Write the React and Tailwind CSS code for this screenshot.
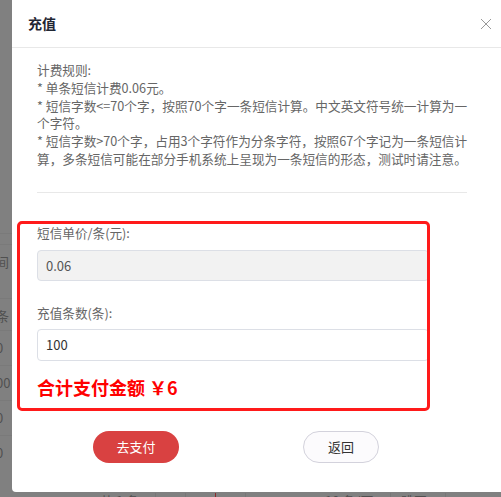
import React from "react";

const rules = [
  "计费规则:",
  "* 单条短信计费0.06元。",
  "* 短信字数<=70个字，按照70个字一条短信计算。中文英文符号统一计算为一",
  "个字符。",
  "* 短信字数>70个字，占用3个字符作为分条字符，按照67个字记为一条短信计",
  "算，多条短信可能在部分手机系统上呈现为一条短信的形态，测试时请注意。",
];

// table behind the mask, only a sliver is visible on the left
const bgRows = [
  { top: 233, text: "" },
  { top: 244, text: "间" },
  { top: 298, text: "条" },
  { top: 330, text: "0" },
  { top: 365, text: "00" },
  { top: 400, text: "0" },
  { top: 435, text: "0" },
];

const App = () => {
  return (
    <div
      className="relative w-[501px] h-[497px] overflow-hidden bg-[#808080]"
      style={{ fontFamily: '"Noto Sans CJK SC", "Noto Sans", sans-serif' }}
    >
      {/* page behind the overlay */}
      <div className="absolute left-0 top-0 w-[12px] h-full">
        {bgRows.map((row, i) => (
          <div
            key={i}
            className="absolute left-[-4px] w-[40px] h-[34px] border-t border-[#7a7a7a] text-[13px] leading-[34px] text-[#505050]"
            style={{ top: row.top }}
          >
            {row.text}
          </div>
        ))}
      </div>
      <div className="absolute left-[100px] top-[493px] flex text-[13px] leading-[16px] text-[#505050]">
        <span className="w-[55px]">共 1 条</span>
        <span className="w-[30px] border-l border-[#777]"></span>
        <span className="w-[30px] border-l border-[#777]"></span>
        <span className="w-[30px] border-l border-[#8a2a2a]"></span>
        <span className="w-[50px] border-l border-[#777]"></span>
        <span className="w-[95px] pl-[30px]">10 条/页</span>
        <span className="w-[55px] border-l border-[#777] pl-[10px]">跳至</span>
        <span className="w-[50px] border-l border-[#777]"></span>
        <span className="pl-[30px]">页</span>
      </div>

      {/* modal */}
      <div className="relative ml-[12px] w-[489px] h-[492px] bg-white rounded-bl-[4px]">
        <div className="flex items-center justify-between h-[48px] pl-[16px] pr-[9px] border-b border-[#e8e8e8]">
          <span className="text-[14px] font-bold text-[#1f2633]">充值</span>
          <svg width="12" height="12" viewBox="0 0 12 12" className="text-[#999]">
            <path d="M1 1L11 11M11 1L1 11" stroke="currentColor" strokeWidth="1" />
          </svg>
        </div>

        <div className="pl-[25px] pt-[13px]">
          <div className="text-[12.65px] leading-[17.8px] text-[#666]">
            {rules.map((line, i) => (
              <div key={i} className="whitespace-nowrap">
                {line}
              </div>
            ))}
          </div>
          <div className="mt-[24px] w-[430px] border-t border-[#e8e8e8]"></div>

          <div className="pt-[31px] w-[392px]">
            <div className="text-[12.65px] leading-[18px] text-[#666]">短信单价/条(元):</div>
            <div className="mt-[8px] h-[31px] flex items-center pl-[8px] bg-[#f2f2f2] border border-[#dcdfe6] rounded-[4px] text-[13px] text-[#555]">
              0.06
            </div>
            <div className="mt-[23px] text-[12.65px] leading-[18px] text-[#666]">充值条数(条):</div>
            <div className="mt-[7px] h-[32px] flex items-center pl-[8px] bg-white border border-[#dcdfe6] rounded-[4px] text-[13px] text-[#333]">
              100
            </div>
            <div className="mt-[13px] text-[18px] leading-[26px] font-bold text-[#ff0000]">
              合计支付金额&nbsp;￥6
            </div>
          </div>

          <div className="flex mt-[31px]">
            <button className="ml-[56px] w-[86px] h-[32px] rounded-full bg-[#d94141] text-white text-[13px]">
              去支付
            </button>
            <button className="ml-[124px] w-[76px] h-[32px] rounded-full bg-[#fcfbfd] border border-[#d3d2dc] text-[#333] text-[13px]">
              返回
            </button>
          </div>
        </div>

        {/* red annotation box drawn over the form */}
        <div className="absolute left-[5px] top-[221px] w-[413px] h-[190px] border-[3px] border-[#ff1a1a] rounded-[5px] pointer-events-none"></div>
      </div>
    </div>
  );
};

export default App;
